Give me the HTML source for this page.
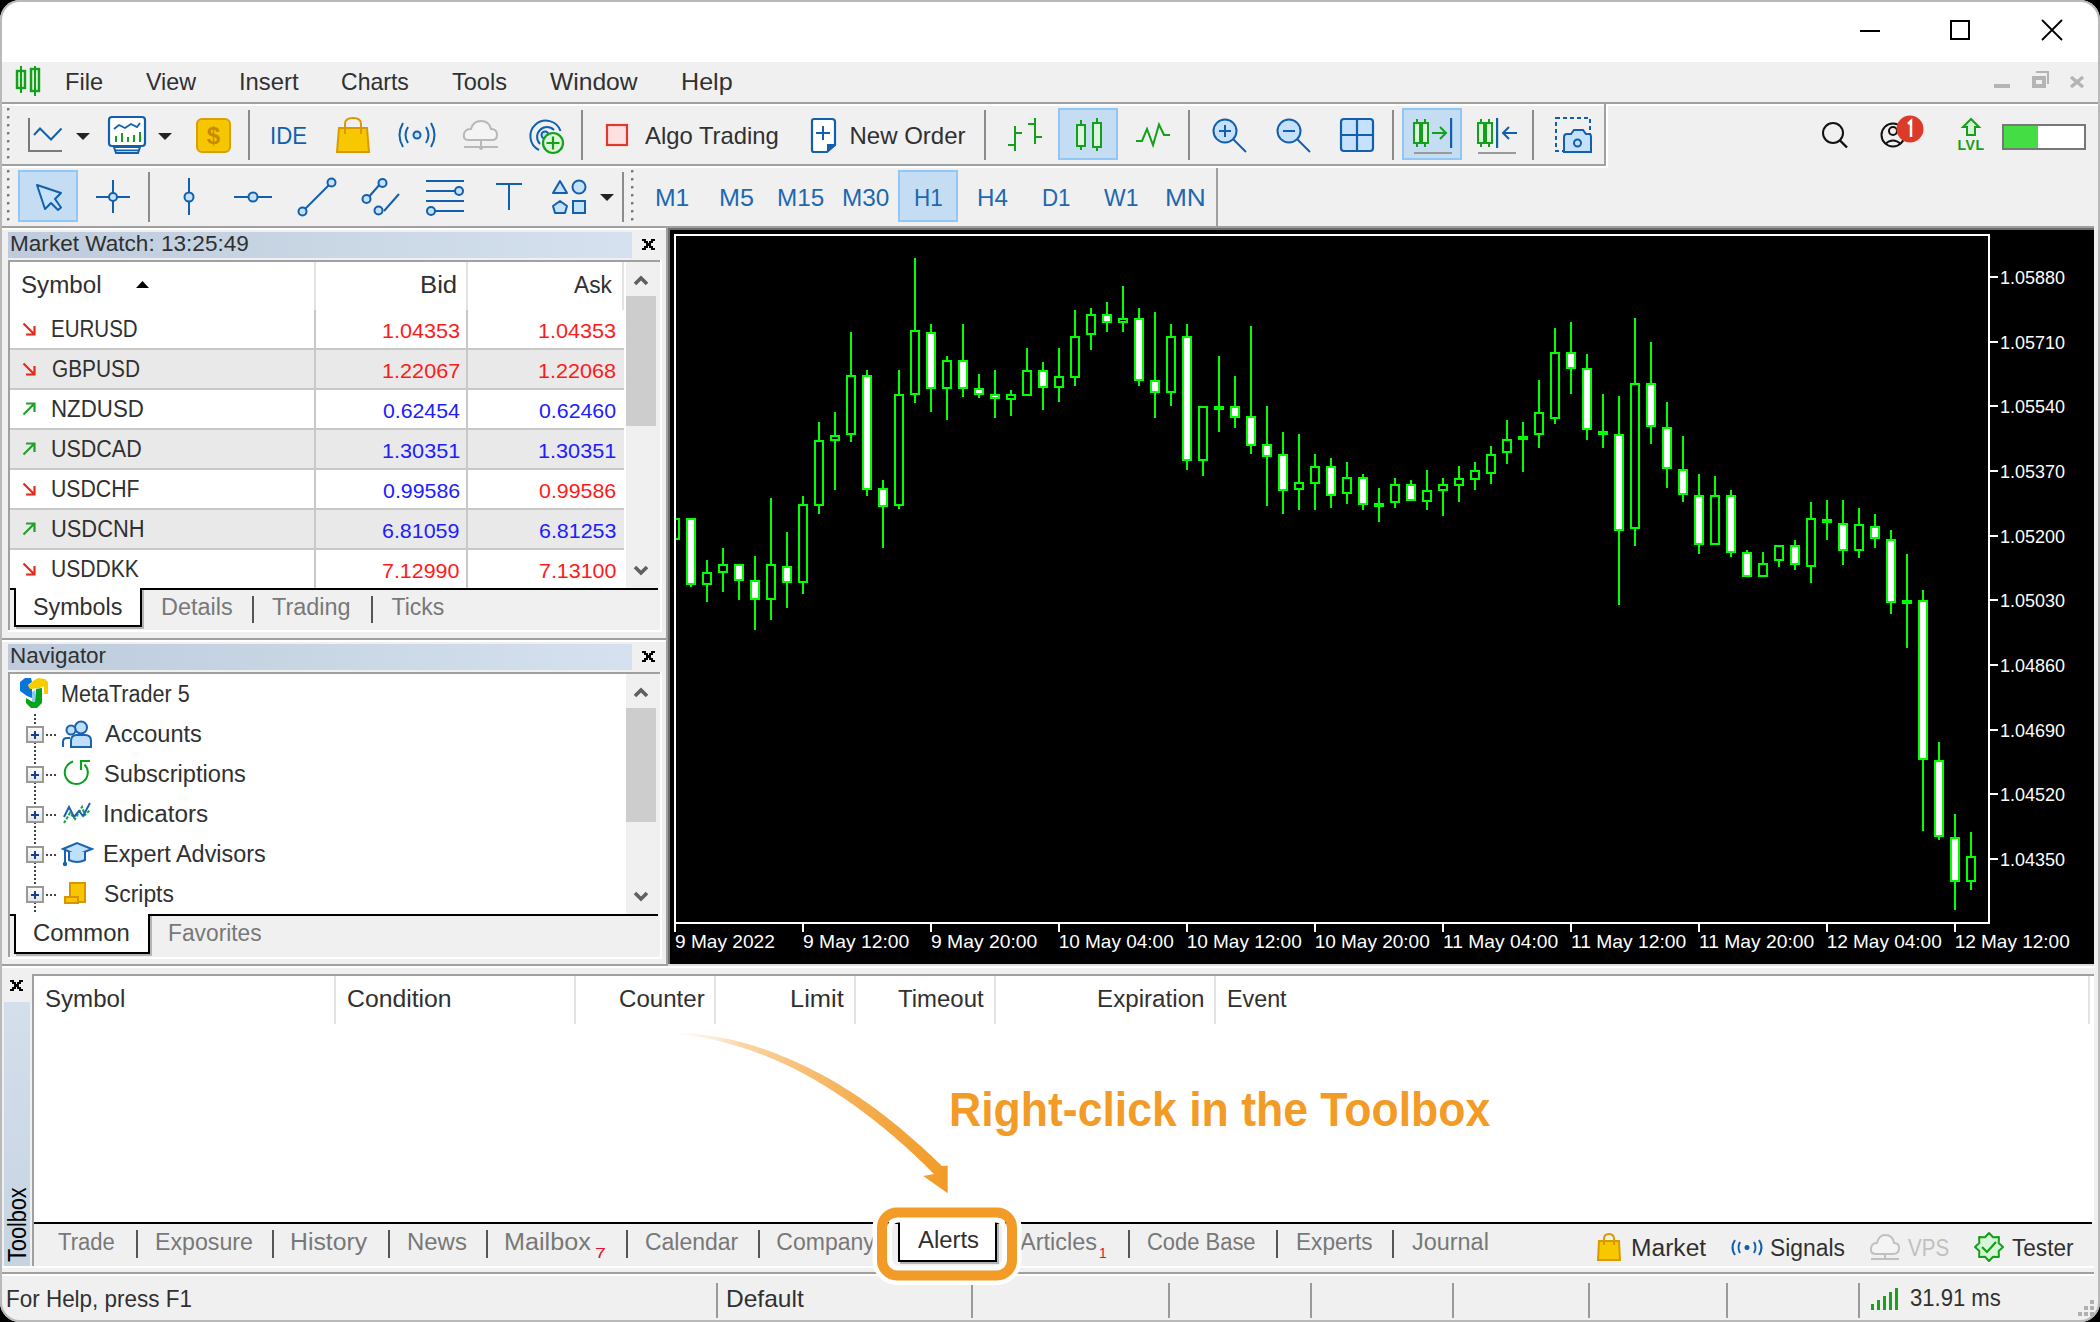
<!DOCTYPE html>
<html><head><meta charset="utf-8"><style>
html,body{margin:0;padding:0;}
body{width:2100px;height:1322px;overflow:hidden;position:relative;background:#f0f0f0;font-family:"Liberation Sans",sans-serif;}
.t{position:absolute;white-space:pre;transform-origin:0 0;font-family:"Liberation Sans",sans-serif;}
.r{position:absolute;}
svg{position:absolute;overflow:visible;}
</style></head><body>
<div class="r" style="left:0px;top:0px;width:2100px;height:1322px;background:#f0f0f0;"></div>
<div class="r" style="left:0px;top:0px;width:2100px;height:62px;background:#fff;"></div>
<div class="r" style="left:0px;top:102px;width:2100px;height:2px;background:#a0a0a0;"></div>
<div class="r" style="left:0px;top:104px;width:2100px;height:2px;background:#fff;"></div>
<div class="r" style="left:0px;top:164px;width:1606px;height:2px;background:#a0a0a0;"></div>
<div class="r" style="left:0px;top:166px;width:1608px;height:2px;background:#fff;"></div>
<div class="r" style="left:1604px;top:104px;width:2px;height:62px;background:#a0a0a0;"></div>
<div class="r" style="left:1606px;top:104px;width:2px;height:64px;background:#fff;"></div>
<div class="r" style="left:1216px;top:168px;width:2px;height:58px;background:#a0a0a0;"></div>
<div class="r" style="left:0px;top:226px;width:2100px;height:2px;background:#a0a0a0;"></div>
<div class="r" style="left:0px;top:228px;width:670px;height:2px;background:#fff;"></div>
<div class="r" style="left:666px;top:228px;width:2px;height:738px;background:#a0a0a0;"></div>
<div class="r" style="left:668px;top:228px;width:1426px;height:2px;background:#6d6d6d;"></div>
<div class="r" style="left:668px;top:228px;width:2px;height:736px;background:#6d6d6d;"></div>
<div class="r" style="left:670px;top:230px;width:1424px;height:734px;background:#000;"></div>
<div class="r" style="left:2094px;top:106px;width:4px;height:1216px;background:#f0f0f0;"></div>
<svg style="left:0;top:0" width="2100" height="1322" viewBox="0 0 2100 1322" shape-rendering="crispEdges"><defs><clipPath id="pc"><rect x="676" y="236" width="1312" height="686"/></clipPath></defs><g clip-path="url(#pc)"><rect x="674" y="518" width="2" height="22" fill="#00ff00"/><rect x="670" y="518" width="10" height="22" fill="#00ff00"/><rect x="672" y="520" width="6" height="18" fill="#000"/><rect x="690" y="518" width="2" height="69" fill="#00ff00"/><rect x="686" y="518" width="10" height="67" fill="#00ff00"/><rect x="688" y="520" width="6" height="63" fill="#fff"/><rect x="706" y="560" width="2" height="42" fill="#00ff00"/><rect x="702" y="572" width="10" height="13" fill="#00ff00"/><rect x="704" y="574" width="6" height="9" fill="#000"/><rect x="722" y="548" width="2" height="44" fill="#00ff00"/><rect x="718" y="564" width="10" height="9" fill="#00ff00"/><rect x="720" y="566" width="6" height="5" fill="#000"/><rect x="738" y="564" width="2" height="36" fill="#00ff00"/><rect x="734" y="564" width="10" height="17" fill="#00ff00"/><rect x="736" y="566" width="6" height="13" fill="#fff"/><rect x="754" y="556" width="2" height="74" fill="#00ff00"/><rect x="750" y="580" width="10" height="20" fill="#00ff00"/><rect x="752" y="582" width="6" height="16" fill="#fff"/><rect x="770" y="498" width="2" height="122" fill="#00ff00"/><rect x="766" y="564" width="10" height="36" fill="#00ff00"/><rect x="768" y="566" width="6" height="32" fill="#000"/><rect x="786" y="532" width="2" height="76" fill="#00ff00"/><rect x="782" y="566" width="10" height="17" fill="#00ff00"/><rect x="784" y="568" width="6" height="13" fill="#fff"/><rect x="802" y="496" width="2" height="98" fill="#00ff00"/><rect x="798" y="504" width="10" height="79" fill="#00ff00"/><rect x="800" y="506" width="6" height="75" fill="#000"/><rect x="818" y="422" width="2" height="92" fill="#00ff00"/><rect x="814" y="440" width="10" height="66" fill="#00ff00"/><rect x="816" y="442" width="6" height="62" fill="#000"/><rect x="834" y="412" width="2" height="78" fill="#00ff00"/><rect x="830" y="435" width="10" height="6" fill="#00ff00"/><rect x="832" y="437" width="6" height="2" fill="#000"/><rect x="850" y="332" width="2" height="110" fill="#00ff00"/><rect x="846" y="375" width="10" height="60" fill="#00ff00"/><rect x="848" y="377" width="6" height="56" fill="#000"/><rect x="866" y="370" width="2" height="126" fill="#00ff00"/><rect x="862" y="375" width="10" height="115" fill="#00ff00"/><rect x="864" y="377" width="6" height="111" fill="#fff"/><rect x="882" y="480" width="2" height="68" fill="#00ff00"/><rect x="878" y="488" width="10" height="19" fill="#00ff00"/><rect x="880" y="490" width="6" height="15" fill="#fff"/><rect x="898" y="370" width="2" height="139" fill="#00ff00"/><rect x="894" y="394" width="10" height="112" fill="#00ff00"/><rect x="896" y="396" width="6" height="108" fill="#000"/><rect x="914" y="258" width="2" height="145" fill="#00ff00"/><rect x="910" y="330" width="10" height="65" fill="#00ff00"/><rect x="912" y="332" width="6" height="61" fill="#000"/><rect x="930" y="324" width="2" height="88" fill="#00ff00"/><rect x="926" y="332" width="10" height="57" fill="#00ff00"/><rect x="928" y="334" width="6" height="53" fill="#fff"/><rect x="946" y="356" width="2" height="64" fill="#00ff00"/><rect x="942" y="360" width="10" height="29" fill="#00ff00"/><rect x="944" y="362" width="6" height="25" fill="#000"/><rect x="962" y="324" width="2" height="73" fill="#00ff00"/><rect x="958" y="360" width="10" height="29" fill="#00ff00"/><rect x="960" y="362" width="6" height="25" fill="#fff"/><rect x="978" y="374" width="2" height="24" fill="#00ff00"/><rect x="974" y="388" width="10" height="7" fill="#00ff00"/><rect x="976" y="390" width="6" height="3" fill="#fff"/><rect x="994" y="370" width="2" height="48" fill="#00ff00"/><rect x="990" y="394" width="10" height="5" fill="#00ff00"/><rect x="992" y="396" width="6" height="1" fill="#fff"/><rect x="1010" y="390" width="2" height="26" fill="#00ff00"/><rect x="1006" y="394" width="10" height="6" fill="#00ff00"/><rect x="1008" y="396" width="6" height="2" fill="#000"/><rect x="1026" y="348" width="2" height="48" fill="#00ff00"/><rect x="1022" y="370" width="10" height="26" fill="#00ff00"/><rect x="1024" y="372" width="6" height="22" fill="#000"/><rect x="1042" y="362" width="2" height="48" fill="#00ff00"/><rect x="1038" y="370" width="10" height="18" fill="#00ff00"/><rect x="1040" y="372" width="6" height="14" fill="#fff"/><rect x="1058" y="348" width="2" height="54" fill="#00ff00"/><rect x="1054" y="376" width="10" height="12" fill="#00ff00"/><rect x="1056" y="378" width="6" height="8" fill="#000"/><rect x="1074" y="310" width="2" height="76" fill="#00ff00"/><rect x="1070" y="336" width="10" height="42" fill="#00ff00"/><rect x="1072" y="338" width="6" height="38" fill="#000"/><rect x="1090" y="308" width="2" height="42" fill="#00ff00"/><rect x="1086" y="314" width="10" height="21" fill="#00ff00"/><rect x="1088" y="316" width="6" height="17" fill="#000"/><rect x="1106" y="302" width="2" height="30" fill="#00ff00"/><rect x="1102" y="314" width="10" height="9" fill="#00ff00"/><rect x="1104" y="316" width="6" height="5" fill="#fff"/><rect x="1122" y="286" width="2" height="46" fill="#00ff00"/><rect x="1118" y="318" width="10" height="5" fill="#00ff00"/><rect x="1120" y="320" width="6" height="1" fill="#000"/><rect x="1138" y="308" width="2" height="78" fill="#00ff00"/><rect x="1134" y="318" width="10" height="63" fill="#00ff00"/><rect x="1136" y="320" width="6" height="59" fill="#fff"/><rect x="1154" y="312" width="2" height="106" fill="#00ff00"/><rect x="1150" y="380" width="10" height="13" fill="#00ff00"/><rect x="1152" y="382" width="6" height="9" fill="#fff"/><rect x="1170" y="324" width="2" height="82" fill="#00ff00"/><rect x="1166" y="336" width="10" height="57" fill="#00ff00"/><rect x="1168" y="338" width="6" height="53" fill="#000"/><rect x="1186" y="324" width="2" height="146" fill="#00ff00"/><rect x="1182" y="336" width="10" height="125" fill="#00ff00"/><rect x="1184" y="338" width="6" height="121" fill="#fff"/><rect x="1202" y="406" width="2" height="70" fill="#00ff00"/><rect x="1198" y="406" width="10" height="55" fill="#00ff00"/><rect x="1200" y="408" width="6" height="51" fill="#000"/><rect x="1218" y="356" width="2" height="76" fill="#00ff00"/><rect x="1214" y="406" width="10" height="4" fill="#00ff00"/><rect x="1216" y="408" width="6" height="0" fill="#fff"/><rect x="1234" y="376" width="2" height="52" fill="#00ff00"/><rect x="1230" y="406" width="10" height="12" fill="#00ff00"/><rect x="1232" y="408" width="6" height="8" fill="#fff"/><rect x="1250" y="326" width="2" height="128" fill="#00ff00"/><rect x="1246" y="416" width="10" height="30" fill="#00ff00"/><rect x="1248" y="418" width="6" height="26" fill="#fff"/><rect x="1266" y="406" width="2" height="100" fill="#00ff00"/><rect x="1262" y="444" width="10" height="13" fill="#00ff00"/><rect x="1264" y="446" width="6" height="9" fill="#fff"/><rect x="1282" y="432" width="2" height="82" fill="#00ff00"/><rect x="1278" y="454" width="10" height="37" fill="#00ff00"/><rect x="1280" y="456" width="6" height="33" fill="#fff"/><rect x="1298" y="434" width="2" height="76" fill="#00ff00"/><rect x="1294" y="482" width="10" height="8" fill="#00ff00"/><rect x="1296" y="484" width="6" height="4" fill="#000"/><rect x="1314" y="454" width="2" height="56" fill="#00ff00"/><rect x="1310" y="466" width="10" height="18" fill="#00ff00"/><rect x="1312" y="468" width="6" height="14" fill="#000"/><rect x="1330" y="458" width="2" height="50" fill="#00ff00"/><rect x="1326" y="466" width="10" height="30" fill="#00ff00"/><rect x="1328" y="468" width="6" height="26" fill="#fff"/><rect x="1346" y="462" width="2" height="42" fill="#00ff00"/><rect x="1342" y="477" width="10" height="17" fill="#00ff00"/><rect x="1344" y="479" width="6" height="13" fill="#000"/><rect x="1362" y="474" width="2" height="36" fill="#00ff00"/><rect x="1358" y="477" width="10" height="28" fill="#00ff00"/><rect x="1360" y="479" width="6" height="24" fill="#fff"/><rect x="1378" y="488" width="2" height="34" fill="#00ff00"/><rect x="1374" y="503" width="10" height="4" fill="#00ff00"/><rect x="1376" y="505" width="6" height="0" fill="#fff"/><rect x="1394" y="478" width="2" height="30" fill="#00ff00"/><rect x="1390" y="484" width="10" height="19" fill="#00ff00"/><rect x="1392" y="486" width="6" height="15" fill="#000"/><rect x="1410" y="480" width="2" height="21" fill="#00ff00"/><rect x="1406" y="484" width="10" height="17" fill="#00ff00"/><rect x="1408" y="486" width="6" height="13" fill="#fff"/><rect x="1426" y="470" width="2" height="40" fill="#00ff00"/><rect x="1422" y="490" width="10" height="12" fill="#00ff00"/><rect x="1424" y="492" width="6" height="8" fill="#000"/><rect x="1442" y="478" width="2" height="38" fill="#00ff00"/><rect x="1438" y="484" width="10" height="7" fill="#00ff00"/><rect x="1440" y="486" width="6" height="3" fill="#000"/><rect x="1458" y="466" width="2" height="36" fill="#00ff00"/><rect x="1454" y="478" width="10" height="8" fill="#00ff00"/><rect x="1456" y="480" width="6" height="4" fill="#000"/><rect x="1474" y="462" width="2" height="28" fill="#00ff00"/><rect x="1470" y="470" width="10" height="10" fill="#00ff00"/><rect x="1472" y="472" width="6" height="6" fill="#000"/><rect x="1490" y="446" width="2" height="38" fill="#00ff00"/><rect x="1486" y="454" width="10" height="20" fill="#00ff00"/><rect x="1488" y="456" width="6" height="16" fill="#000"/><rect x="1506" y="420" width="2" height="44" fill="#00ff00"/><rect x="1502" y="439" width="10" height="14" fill="#00ff00"/><rect x="1504" y="441" width="6" height="10" fill="#000"/><rect x="1522" y="422" width="2" height="50" fill="#00ff00"/><rect x="1518" y="436" width="10" height="4" fill="#00ff00"/><rect x="1520" y="438" width="6" height="0" fill="#fff"/><rect x="1538" y="380" width="2" height="68" fill="#00ff00"/><rect x="1534" y="412" width="10" height="23" fill="#00ff00"/><rect x="1536" y="414" width="6" height="19" fill="#000"/><rect x="1554" y="328" width="2" height="96" fill="#00ff00"/><rect x="1550" y="352" width="10" height="67" fill="#00ff00"/><rect x="1552" y="354" width="6" height="63" fill="#000"/><rect x="1570" y="322" width="2" height="72" fill="#00ff00"/><rect x="1566" y="352" width="10" height="17" fill="#00ff00"/><rect x="1568" y="354" width="6" height="13" fill="#fff"/><rect x="1586" y="354" width="2" height="86" fill="#00ff00"/><rect x="1582" y="368" width="10" height="62" fill="#00ff00"/><rect x="1584" y="370" width="6" height="58" fill="#fff"/><rect x="1602" y="394" width="2" height="54" fill="#00ff00"/><rect x="1598" y="431" width="10" height="4" fill="#00ff00"/><rect x="1600" y="433" width="6" height="0" fill="#fff"/><rect x="1618" y="396" width="2" height="209" fill="#00ff00"/><rect x="1614" y="434" width="10" height="97" fill="#00ff00"/><rect x="1616" y="436" width="6" height="93" fill="#fff"/><rect x="1634" y="318" width="2" height="228" fill="#00ff00"/><rect x="1630" y="383" width="10" height="146" fill="#00ff00"/><rect x="1632" y="385" width="6" height="142" fill="#000"/><rect x="1650" y="342" width="2" height="102" fill="#00ff00"/><rect x="1646" y="383" width="10" height="44" fill="#00ff00"/><rect x="1648" y="385" width="6" height="40" fill="#fff"/><rect x="1666" y="402" width="2" height="86" fill="#00ff00"/><rect x="1662" y="427" width="10" height="42" fill="#00ff00"/><rect x="1664" y="429" width="6" height="38" fill="#fff"/><rect x="1682" y="436" width="2" height="66" fill="#00ff00"/><rect x="1678" y="469" width="10" height="26" fill="#00ff00"/><rect x="1680" y="471" width="6" height="22" fill="#fff"/><rect x="1698" y="474" width="2" height="80" fill="#00ff00"/><rect x="1694" y="495" width="10" height="50" fill="#00ff00"/><rect x="1696" y="497" width="6" height="46" fill="#fff"/><rect x="1714" y="476" width="2" height="69" fill="#00ff00"/><rect x="1710" y="495" width="10" height="50" fill="#00ff00"/><rect x="1712" y="497" width="6" height="46" fill="#000"/><rect x="1730" y="490" width="2" height="67" fill="#00ff00"/><rect x="1726" y="495" width="10" height="58" fill="#00ff00"/><rect x="1728" y="497" width="6" height="54" fill="#fff"/><rect x="1746" y="550" width="2" height="27" fill="#00ff00"/><rect x="1742" y="552" width="10" height="25" fill="#00ff00"/><rect x="1744" y="554" width="6" height="21" fill="#fff"/><rect x="1762" y="552" width="2" height="25" fill="#00ff00"/><rect x="1758" y="563" width="10" height="14" fill="#00ff00"/><rect x="1760" y="565" width="6" height="10" fill="#000"/><rect x="1778" y="545" width="2" height="22" fill="#00ff00"/><rect x="1774" y="545" width="10" height="16" fill="#00ff00"/><rect x="1776" y="547" width="6" height="12" fill="#000"/><rect x="1794" y="540" width="2" height="30" fill="#00ff00"/><rect x="1790" y="545" width="10" height="20" fill="#00ff00"/><rect x="1792" y="547" width="6" height="16" fill="#fff"/><rect x="1810" y="502" width="2" height="81" fill="#00ff00"/><rect x="1806" y="518" width="10" height="49" fill="#00ff00"/><rect x="1808" y="520" width="6" height="45" fill="#000"/><rect x="1826" y="500" width="2" height="40" fill="#00ff00"/><rect x="1822" y="519" width="10" height="4" fill="#00ff00"/><rect x="1824" y="521" width="6" height="0" fill="#fff"/><rect x="1842" y="500" width="2" height="65" fill="#00ff00"/><rect x="1838" y="523" width="10" height="28" fill="#00ff00"/><rect x="1840" y="525" width="6" height="24" fill="#fff"/><rect x="1858" y="508" width="2" height="50" fill="#00ff00"/><rect x="1854" y="524" width="10" height="27" fill="#00ff00"/><rect x="1856" y="526" width="6" height="23" fill="#000"/><rect x="1874" y="514" width="2" height="34" fill="#00ff00"/><rect x="1870" y="526" width="10" height="13" fill="#00ff00"/><rect x="1872" y="528" width="6" height="9" fill="#fff"/><rect x="1890" y="530" width="2" height="84" fill="#00ff00"/><rect x="1886" y="539" width="10" height="64" fill="#00ff00"/><rect x="1888" y="541" width="6" height="60" fill="#fff"/><rect x="1906" y="554" width="2" height="94" fill="#00ff00"/><rect x="1902" y="600" width="10" height="4" fill="#00ff00"/><rect x="1904" y="602" width="6" height="0" fill="#fff"/><rect x="1922" y="590" width="2" height="241" fill="#00ff00"/><rect x="1918" y="600" width="10" height="160" fill="#00ff00"/><rect x="1920" y="602" width="6" height="156" fill="#fff"/><rect x="1938" y="742" width="2" height="98" fill="#00ff00"/><rect x="1934" y="760" width="10" height="77" fill="#00ff00"/><rect x="1936" y="762" width="6" height="73" fill="#fff"/><rect x="1954" y="814" width="2" height="96" fill="#00ff00"/><rect x="1950" y="837" width="10" height="45" fill="#00ff00"/><rect x="1952" y="839" width="6" height="41" fill="#fff"/><rect x="1970" y="832" width="2" height="58" fill="#00ff00"/><rect x="1966" y="856" width="10" height="26" fill="#00ff00"/><rect x="1968" y="858" width="6" height="22" fill="#000"/></g><rect x="674" y="234" width="1316" height="2" fill="#fff"/><rect x="674" y="234" width="2" height="690" fill="#fff"/><rect x="1988" y="234" width="2" height="690" fill="#fff"/><rect x="674" y="922" width="1316" height="2" fill="#fff"/><rect x="1990" y="276" width="8" height="2" fill="#fff"/><rect x="1990" y="341" width="8" height="2" fill="#fff"/><rect x="1990" y="405" width="8" height="2" fill="#fff"/><rect x="1990" y="470" width="8" height="2" fill="#fff"/><rect x="1990" y="535" width="8" height="2" fill="#fff"/><rect x="1990" y="599" width="8" height="2" fill="#fff"/><rect x="1990" y="664" width="8" height="2" fill="#fff"/><rect x="1990" y="729" width="8" height="2" fill="#fff"/><rect x="1990" y="793" width="8" height="2" fill="#fff"/><rect x="1990" y="858" width="8" height="2" fill="#fff"/><rect x="674" y="924" width="2" height="8" fill="#fff"/><rect x="802" y="924" width="2" height="8" fill="#fff"/><rect x="930" y="924" width="2" height="8" fill="#fff"/><rect x="1058" y="924" width="2" height="8" fill="#fff"/><rect x="1186" y="924" width="2" height="8" fill="#fff"/><rect x="1314" y="924" width="2" height="8" fill="#fff"/><rect x="1442" y="924" width="2" height="8" fill="#fff"/><rect x="1570" y="924" width="2" height="8" fill="#fff"/><rect x="1698" y="924" width="2" height="8" fill="#fff"/><rect x="1826" y="924" width="2" height="8" fill="#fff"/><rect x="1954" y="924" width="2" height="8" fill="#fff"/></svg>
<div class="t" style="left:1999.70px;top:267.91px;font-size:19px;line-height:19px;color:#fff;transform:scaleX(0.9456);">1.05880</div>
<div class="t" style="left:1999.70px;top:332.58px;font-size:19px;line-height:19px;color:#fff;transform:scaleX(0.9456);">1.05710</div>
<div class="t" style="left:1999.70px;top:397.25px;font-size:19px;line-height:19px;color:#fff;transform:scaleX(0.9456);">1.05540</div>
<div class="t" style="left:1999.70px;top:461.91px;font-size:19px;line-height:19px;color:#fff;transform:scaleX(0.9456);">1.05370</div>
<div class="t" style="left:1999.70px;top:526.58px;font-size:19px;line-height:19px;color:#fff;transform:scaleX(0.9456);">1.05200</div>
<div class="t" style="left:1999.70px;top:591.25px;font-size:19px;line-height:19px;color:#fff;transform:scaleX(0.9456);">1.05030</div>
<div class="t" style="left:1999.70px;top:655.91px;font-size:19px;line-height:19px;color:#fff;transform:scaleX(0.9456);">1.04860</div>
<div class="t" style="left:1999.70px;top:720.58px;font-size:19px;line-height:19px;color:#fff;transform:scaleX(0.9456);">1.04690</div>
<div class="t" style="left:1999.70px;top:785.25px;font-size:19px;line-height:19px;color:#fff;transform:scaleX(0.9456);">1.04520</div>
<div class="t" style="left:1999.70px;top:849.91px;font-size:19px;line-height:19px;color:#fff;transform:scaleX(0.9456);">1.04350</div>
<div class="t" style="left:675.12px;top:931.91px;font-size:19px;line-height:19px;color:#fff;transform:scaleX(1.0051);">9 May 2022</div>
<div class="t" style="left:803.11px;top:931.91px;font-size:19px;line-height:19px;color:#fff;transform:scaleX(1.0165);">9 May 12:00</div>
<div class="t" style="left:931.11px;top:931.91px;font-size:19px;line-height:19px;color:#fff;transform:scaleX(1.0165);">9 May 20:00</div>
<div class="t" style="left:1058.63px;top:931.91px;font-size:19px;line-height:19px;color:#fff;">10 May 04:00</div>
<div class="t" style="left:1186.63px;top:931.91px;font-size:19px;line-height:19px;color:#fff;">10 May 12:00</div>
<div class="t" style="left:1314.63px;top:931.91px;font-size:19px;line-height:19px;color:#fff;">10 May 20:00</div>
<div class="t" style="left:1442.61px;top:931.91px;font-size:19px;line-height:19px;color:#fff;transform:scaleX(1.0123);">11 May 04:00</div>
<div class="t" style="left:1570.61px;top:931.91px;font-size:19px;line-height:19px;color:#fff;transform:scaleX(1.0123);">11 May 12:00</div>
<div class="t" style="left:1698.61px;top:931.91px;font-size:19px;line-height:19px;color:#fff;transform:scaleX(1.0123);">11 May 20:00</div>
<div class="t" style="left:1826.63px;top:931.91px;font-size:19px;line-height:19px;color:#fff;">12 May 04:00</div>
<div class="t" style="left:1954.63px;top:931.91px;font-size:19px;line-height:19px;color:#fff;">12 May 12:00</div>
<div class="r" style="left:8px;top:232px;width:624px;height:26px;background:linear-gradient(90deg,#bdcbdc 0%,#c9d6e4 50%,#d5e1ee 100%);"></div>
<div class="t" style="left:10.20px;top:232.87px;font-size:22px;line-height:22px;color:#303030;transform:scaleX(1.0261);">Market Watch: 13:25:49</div>
<svg style="left:642px;top:239px" width="13" height="11" viewBox="0 0 13 11" shape-rendering="crispEdges"><path d="M0 0h4v2h2v2h1v-2h2v-2h4v2h-2v2h-2v3h2v2h2v2h-4v-2h-2v-2h-1v2h-2v2h-4v-2h2v-2h2v-3h-2v-2h-2z" fill="#000"/></svg>
<div class="r" style="left:8px;top:260px;width:652px;height:2px;background:#a0a0a0;"></div>
<div class="r" style="left:8px;top:260px;width:2px;height:372px;background:#a0a0a0;"></div>
<div class="r" style="left:660px;top:260px;width:2px;height:372px;background:#fff;"></div>
<div class="r" style="left:8px;top:630px;width:654px;height:2px;background:#fff;"></div>
<div class="r" style="left:10px;top:262px;width:616px;height:327px;background:#fff;"></div>
<div class="r" style="left:626px;top:262px;width:34px;height:327px;background:#f0f0f0;"></div>
<div class="r" style="left:626px;top:296px;width:30px;height:130px;background:#cdcdcd;"></div>
<svg style="left:0;top:0" width="1" height="1"><path d="M635 284 L641 278 L647 284" stroke="#606060" stroke-width="3.6" fill="none" stroke-linecap="butt" stroke-linejoin="miter"/></svg>
<svg style="left:0;top:0" width="1" height="1"><path d="M635 567 L641 573 L647 567" stroke="#606060" stroke-width="3.6" fill="none" stroke-linecap="butt" stroke-linejoin="miter"/></svg>
<div class="r" style="left:314px;top:262px;width:2px;height:48px;background:#e3e3e3;"></div>
<div class="r" style="left:466px;top:262px;width:2px;height:48px;background:#e3e3e3;"></div>
<div class="r" style="left:622px;top:262px;width:2px;height:48px;background:#e3e3e3;"></div>
<div class="t" style="left:20.95px;top:274.03px;font-size:23px;line-height:23px;color:#303030;transform:scaleX(1.0505);">Symbol</div>
<svg style="left:136px;top:281px" width="13" height="8"><path d="M0 7L6.5 0L13 7z" fill="#000"/></svg>
<div class="t" style="left:419.91px;top:274.03px;font-size:23px;line-height:23px;color:#303030;transform:scaleX(1.1167);">Bid</div>
<div class="t" style="left:574.00px;top:274.03px;font-size:23px;line-height:23px;color:#303030;transform:scaleX(0.9902);">Ask</div>
<div class="r" style="left:10px;top:348px;width:614px;height:2px;background:#c8c8c8;"></div>
<div class="r" style="left:314px;top:310px;width:2px;height:38px;background:#c8c8c8;"></div>
<div class="r" style="left:466px;top:310px;width:2px;height:38px;background:#c8c8c8;"></div>
<svg style="left:22px;top:322px" width="14" height="14"><path d="M1.5 1.5L12 12M4 12.5H12.5V4" stroke="#e8291c" stroke-width="2.2" fill="none"/></svg>
<div class="t" style="left:51.33px;top:318.23px;font-size:23px;line-height:23px;color:#303030;transform:scaleX(0.8924);">EURUSD</div>
<div class="t" style="left:381.83px;top:319.72px;font-size:21px;line-height:21px;color:#ff1a1a;transform:scaleX(1.0290);">1.04353</div>
<div class="t" style="left:538.33px;top:319.72px;font-size:21px;line-height:21px;color:#ff1a1a;transform:scaleX(1.0290);">1.04353</div>
<div class="r" style="left:10px;top:350px;width:614px;height:38px;background:#e9e9e9;"></div>
<div class="r" style="left:10px;top:388px;width:614px;height:2px;background:#c8c8c8;"></div>
<div class="r" style="left:314px;top:350px;width:2px;height:38px;background:#c8c8c8;"></div>
<div class="r" style="left:466px;top:350px;width:2px;height:38px;background:#c8c8c8;"></div>
<svg style="left:22px;top:362px" width="14" height="14"><path d="M1.5 1.5L12 12M4 12.5H12.5V4" stroke="#e8291c" stroke-width="2.2" fill="none"/></svg>
<div class="t" style="left:51.98px;top:358.23px;font-size:23px;line-height:23px;color:#303030;transform:scaleX(0.9065);">GBPUSD</div>
<div class="t" style="left:381.83px;top:359.72px;font-size:21px;line-height:21px;color:#ff1a1a;transform:scaleX(1.0307);">1.22067</div>
<div class="t" style="left:538.33px;top:359.72px;font-size:21px;line-height:21px;color:#ff1a1a;transform:scaleX(1.0290);">1.22068</div>
<div class="r" style="left:10px;top:428px;width:614px;height:2px;background:#c8c8c8;"></div>
<div class="r" style="left:314px;top:390px;width:2px;height:38px;background:#c8c8c8;"></div>
<div class="r" style="left:466px;top:390px;width:2px;height:38px;background:#c8c8c8;"></div>
<svg style="left:22px;top:402px" width="14" height="14"><path d="M1.5 12.5L12 2M4 1.5H12.5V10" stroke="#21a12a" stroke-width="2.2" fill="none"/></svg>
<div class="t" style="left:51.18px;top:398.23px;font-size:23px;line-height:23px;color:#303030;transform:scaleX(0.9690);">NZDUSD</div>
<div class="t" style="left:382.74px;top:399.72px;font-size:21px;line-height:21px;color:#2020ff;transform:scaleX(1.0117);">0.62454</div>
<div class="t" style="left:539.24px;top:399.72px;font-size:21px;line-height:21px;color:#2020ff;transform:scaleX(1.0151);">0.62460</div>
<div class="r" style="left:10px;top:430px;width:614px;height:38px;background:#e9e9e9;"></div>
<div class="r" style="left:10px;top:468px;width:614px;height:2px;background:#c8c8c8;"></div>
<div class="r" style="left:314px;top:430px;width:2px;height:38px;background:#c8c8c8;"></div>
<div class="r" style="left:466px;top:430px;width:2px;height:38px;background:#c8c8c8;"></div>
<svg style="left:22px;top:442px" width="14" height="14"><path d="M1.5 12.5L12 2M4 1.5H12.5V10" stroke="#21a12a" stroke-width="2.2" fill="none"/></svg>
<div class="t" style="left:51.37px;top:438.23px;font-size:23px;line-height:23px;color:#303030;transform:scaleX(0.9337);">USDCAD</div>
<div class="t" style="left:381.83px;top:439.72px;font-size:21px;line-height:21px;color:#2020ff;transform:scaleX(1.0307);">1.30351</div>
<div class="t" style="left:538.33px;top:439.72px;font-size:21px;line-height:21px;color:#2020ff;transform:scaleX(1.0307);">1.30351</div>
<div class="r" style="left:10px;top:508px;width:614px;height:2px;background:#c8c8c8;"></div>
<div class="r" style="left:314px;top:470px;width:2px;height:38px;background:#c8c8c8;"></div>
<div class="r" style="left:466px;top:470px;width:2px;height:38px;background:#c8c8c8;"></div>
<svg style="left:22px;top:482px" width="14" height="14"><path d="M1.5 1.5L12 12M4 12.5H12.5V4" stroke="#e8291c" stroke-width="2.2" fill="none"/></svg>
<div class="t" style="left:51.38px;top:478.23px;font-size:23px;line-height:23px;color:#303030;transform:scaleX(0.9235);">USDCHF</div>
<div class="t" style="left:382.74px;top:479.72px;font-size:21px;line-height:21px;color:#2020ff;transform:scaleX(1.0168);">0.99586</div>
<div class="t" style="left:539.24px;top:479.72px;font-size:21px;line-height:21px;color:#ff1a1a;transform:scaleX(1.0168);">0.99586</div>
<div class="r" style="left:10px;top:510px;width:614px;height:38px;background:#e9e9e9;"></div>
<div class="r" style="left:10px;top:548px;width:614px;height:2px;background:#c8c8c8;"></div>
<div class="r" style="left:314px;top:510px;width:2px;height:38px;background:#c8c8c8;"></div>
<div class="r" style="left:466px;top:510px;width:2px;height:38px;background:#c8c8c8;"></div>
<svg style="left:22px;top:522px" width="14" height="14"><path d="M1.5 12.5L12 2M4 1.5H12.5V10" stroke="#21a12a" stroke-width="2.2" fill="none"/></svg>
<div class="t" style="left:51.34px;top:518.23px;font-size:23px;line-height:23px;color:#303030;transform:scaleX(0.9499);">USDCNH</div>
<div class="t" style="left:382.48px;top:519.72px;font-size:21px;line-height:21px;color:#2020ff;transform:scaleX(1.0203);">6.81059</div>
<div class="t" style="left:538.98px;top:519.72px;font-size:21px;line-height:21px;color:#2020ff;transform:scaleX(1.0203);">6.81253</div>
<div class="r" style="left:314px;top:550px;width:2px;height:39px;background:#c8c8c8;"></div>
<div class="r" style="left:466px;top:550px;width:2px;height:39px;background:#c8c8c8;"></div>
<svg style="left:22px;top:562px" width="14" height="14"><path d="M1.5 1.5L12 12M4 12.5H12.5V4" stroke="#e8291c" stroke-width="2.2" fill="none"/></svg>
<div class="t" style="left:51.39px;top:558.23px;font-size:23px;line-height:23px;color:#303030;transform:scaleX(0.9173);">USDDKK</div>
<div class="t" style="left:382.35px;top:559.72px;font-size:21px;line-height:21px;color:#ff1a1a;transform:scaleX(1.0203);">7.12990</div>
<div class="t" style="left:538.85px;top:559.72px;font-size:21px;line-height:21px;color:#ff1a1a;transform:scaleX(1.0203);">7.13100</div>
<div class="r" style="left:10px;top:588px;width:648px;height:2px;background:#000;"></div>
<div class="r" style="left:14px;top:588px;width:128px;height:38px;background:#fff;"></div>
<div class="r" style="left:14px;top:588px;width:2px;height:39px;background:#000;"></div>
<div class="r" style="left:140px;top:588px;width:2px;height:39px;background:#000;"></div>
<div class="r" style="left:14px;top:625px;width:128px;height:2px;background:#000;"></div>
<div class="r" style="left:16px;top:627px;width:128px;height:2px;background:#b4b4b4;"></div>
<div class="r" style="left:142px;top:590px;width:2px;height:39px;background:#b4b4b4;"></div>
<div class="t" style="left:32.99px;top:595.83px;font-size:23px;line-height:23px;color:#303030;transform:scaleX(1.0130);">Symbols</div>
<div class="t" style="left:161.09px;top:595.83px;font-size:23px;line-height:23px;color:#787878;transform:scaleX(1.0193);">Details</div>
<div class="r" style="left:252px;top:596px;width:2px;height:27px;background:#555;"></div>
<div class="t" style="left:272.19px;top:595.83px;font-size:23px;line-height:23px;color:#787878;transform:scaleX(1.0193);">Trading</div>
<div class="r" style="left:371px;top:596px;width:2px;height:27px;background:#555;"></div>
<div class="t" style="left:391.50px;top:595.83px;font-size:23px;line-height:23px;color:#787878;">Ticks</div>
<div class="r" style="left:2px;top:638px;width:664px;height:2px;background:#a0a0a0;"></div>
<div class="r" style="left:2px;top:640px;width:664px;height:2px;background:#fff;"></div>
<div class="r" style="left:8px;top:644px;width:624px;height:26px;background:linear-gradient(90deg,#bdcbdc 0%,#c9d6e4 50%,#d5e1ee 100%);"></div>
<div class="t" style="left:10.21px;top:644.87px;font-size:22px;line-height:22px;color:#303030;transform:scaleX(1.0204);">Navigator</div>
<svg style="left:642px;top:651px" width="13" height="11" viewBox="0 0 13 11" shape-rendering="crispEdges"><path d="M0 0h4v2h2v2h1v-2h2v-2h4v2h-2v2h-2v3h2v2h2v2h-4v-2h-2v-2h-1v2h-2v2h-4v-2h2v-2h2v-3h-2v-2h-2z" fill="#000"/></svg>
<div class="r" style="left:8px;top:672px;width:652px;height:2px;background:#a0a0a0;"></div>
<div class="r" style="left:8px;top:672px;width:2px;height:287px;background:#a0a0a0;"></div>
<div class="r" style="left:660px;top:672px;width:2px;height:287px;background:#fff;"></div>
<div class="r" style="left:8px;top:957px;width:654px;height:2px;background:#fff;"></div>
<div class="r" style="left:10px;top:674px;width:616px;height:240px;background:#fff;"></div>
<div class="r" style="left:626px;top:674px;width:34px;height:240px;background:#f0f0f0;"></div>
<div class="r" style="left:626px;top:708px;width:30px;height:114px;background:#cdcdcd;"></div>
<svg style="left:0;top:0" width="1" height="1"><path d="M635 696 L641 690 L647 696" stroke="#606060" stroke-width="3.6" fill="none" stroke-linecap="butt" stroke-linejoin="miter"/></svg>
<svg style="left:0;top:0" width="1" height="1"><path d="M635 893 L641 899 L647 893" stroke="#606060" stroke-width="3.6" fill="none" stroke-linecap="butt" stroke-linejoin="miter"/></svg>
<svg style="left:0;top:0" width="1" height="1" shape-rendering="crispEdges"><rect x="34" y="714" width="2" height="2" fill="#444"/><rect x="34" y="718" width="2" height="2" fill="#444"/><rect x="34" y="722" width="2" height="2" fill="#444"/><rect x="34" y="726" width="2" height="2" fill="#444"/><rect x="34" y="730" width="2" height="2" fill="#444"/><rect x="34" y="734" width="2" height="2" fill="#444"/><rect x="34" y="738" width="2" height="2" fill="#444"/><rect x="34" y="742" width="2" height="2" fill="#444"/><rect x="34" y="746" width="2" height="2" fill="#444"/><rect x="34" y="750" width="2" height="2" fill="#444"/><rect x="34" y="754" width="2" height="2" fill="#444"/><rect x="34" y="758" width="2" height="2" fill="#444"/><rect x="34" y="762" width="2" height="2" fill="#444"/><rect x="34" y="766" width="2" height="2" fill="#444"/><rect x="34" y="770" width="2" height="2" fill="#444"/><rect x="34" y="774" width="2" height="2" fill="#444"/><rect x="34" y="778" width="2" height="2" fill="#444"/><rect x="34" y="782" width="2" height="2" fill="#444"/><rect x="34" y="786" width="2" height="2" fill="#444"/><rect x="34" y="790" width="2" height="2" fill="#444"/><rect x="34" y="794" width="2" height="2" fill="#444"/><rect x="34" y="798" width="2" height="2" fill="#444"/><rect x="34" y="802" width="2" height="2" fill="#444"/><rect x="34" y="806" width="2" height="2" fill="#444"/><rect x="34" y="810" width="2" height="2" fill="#444"/><rect x="34" y="814" width="2" height="2" fill="#444"/><rect x="34" y="818" width="2" height="2" fill="#444"/><rect x="34" y="822" width="2" height="2" fill="#444"/><rect x="34" y="826" width="2" height="2" fill="#444"/><rect x="34" y="830" width="2" height="2" fill="#444"/><rect x="34" y="834" width="2" height="2" fill="#444"/><rect x="34" y="838" width="2" height="2" fill="#444"/><rect x="34" y="842" width="2" height="2" fill="#444"/><rect x="34" y="846" width="2" height="2" fill="#444"/><rect x="34" y="850" width="2" height="2" fill="#444"/><rect x="34" y="854" width="2" height="2" fill="#444"/><rect x="34" y="858" width="2" height="2" fill="#444"/><rect x="34" y="862" width="2" height="2" fill="#444"/><rect x="34" y="866" width="2" height="2" fill="#444"/><rect x="34" y="870" width="2" height="2" fill="#444"/><rect x="34" y="874" width="2" height="2" fill="#444"/><rect x="34" y="878" width="2" height="2" fill="#444"/><rect x="34" y="882" width="2" height="2" fill="#444"/><rect x="34" y="886" width="2" height="2" fill="#444"/><rect x="34" y="890" width="2" height="2" fill="#444"/><rect x="34" y="894" width="2" height="2" fill="#444"/><rect x="34" y="898" width="2" height="2" fill="#444"/><rect x="34" y="902" width="2" height="2" fill="#444"/><rect x="34" y="906" width="2" height="2" fill="#444"/><rect x="34" y="910" width="2" height="2" fill="#444"/><rect x="46" y="734" width="2" height="2" fill="#444"/><rect x="50" y="734" width="2" height="2" fill="#444"/><rect x="54" y="734" width="2" height="2" fill="#444"/><rect x="46" y="774" width="2" height="2" fill="#444"/><rect x="50" y="774" width="2" height="2" fill="#444"/><rect x="54" y="774" width="2" height="2" fill="#444"/><rect x="46" y="814" width="2" height="2" fill="#444"/><rect x="50" y="814" width="2" height="2" fill="#444"/><rect x="54" y="814" width="2" height="2" fill="#444"/><rect x="46" y="854" width="2" height="2" fill="#444"/><rect x="50" y="854" width="2" height="2" fill="#444"/><rect x="54" y="854" width="2" height="2" fill="#444"/><rect x="46" y="894" width="2" height="2" fill="#444"/><rect x="50" y="894" width="2" height="2" fill="#444"/><rect x="54" y="894" width="2" height="2" fill="#444"/></svg>
<div class="r" style="left:26px;top:726px;width:14px;height:13px;border:2px solid #9a9a9a;background:linear-gradient(#fafafa,#e4e4e4)"></div>
<svg style="left:26px;top:726px" width="18" height="17" shape-rendering="crispEdges"><rect x="5" y="7.5" width="8" height="2" fill="#1b3d8f"/><rect x="8" y="4.5" width="2" height="8" fill="#1b3d8f"/></svg>
<div class="r" style="left:26px;top:766px;width:14px;height:13px;border:2px solid #9a9a9a;background:linear-gradient(#fafafa,#e4e4e4)"></div>
<svg style="left:26px;top:766px" width="18" height="17" shape-rendering="crispEdges"><rect x="5" y="7.5" width="8" height="2" fill="#1b3d8f"/><rect x="8" y="4.5" width="2" height="8" fill="#1b3d8f"/></svg>
<div class="r" style="left:26px;top:806px;width:14px;height:13px;border:2px solid #9a9a9a;background:linear-gradient(#fafafa,#e4e4e4)"></div>
<svg style="left:26px;top:806px" width="18" height="17" shape-rendering="crispEdges"><rect x="5" y="7.5" width="8" height="2" fill="#1b3d8f"/><rect x="8" y="4.5" width="2" height="8" fill="#1b3d8f"/></svg>
<div class="r" style="left:26px;top:846px;width:14px;height:13px;border:2px solid #9a9a9a;background:linear-gradient(#fafafa,#e4e4e4)"></div>
<svg style="left:26px;top:846px" width="18" height="17" shape-rendering="crispEdges"><rect x="5" y="7.5" width="8" height="2" fill="#1b3d8f"/><rect x="8" y="4.5" width="2" height="8" fill="#1b3d8f"/></svg>
<div class="r" style="left:26px;top:886px;width:14px;height:13px;border:2px solid #9a9a9a;background:linear-gradient(#fafafa,#e4e4e4)"></div>
<svg style="left:26px;top:886px" width="18" height="17" shape-rendering="crispEdges"><rect x="5" y="7.5" width="8" height="2" fill="#1b3d8f"/><rect x="8" y="4.5" width="2" height="8" fill="#1b3d8f"/></svg>
<div class="t" style="left:61.24px;top:682.53px;font-size:23px;line-height:23px;color:#303030;transform:scaleX(0.9377);">MetaTrader 5</div>
<div class="t" style="left:105.00px;top:722.53px;font-size:23px;line-height:23px;color:#303030;transform:scaleX(1.0240);">Accounts</div>
<div class="t" style="left:103.97px;top:762.53px;font-size:23px;line-height:23px;color:#303030;transform:scaleX(1.0275);">Subscriptions</div>
<div class="t" style="left:102.76px;top:802.53px;font-size:23px;line-height:23px;color:#303030;transform:scaleX(1.0543);">Indicators</div>
<div class="t" style="left:103.09px;top:842.53px;font-size:23px;line-height:23px;color:#303030;transform:scaleX(1.0191);">Expert Advisors</div>
<div class="t" style="left:104.01px;top:882.53px;font-size:23px;line-height:23px;color:#303030;transform:scaleX(0.9945);">Scripts</div>
<svg style="left:0;top:0" width="1" height="1">
<path d="M25 678 L31 678 L32 682 L28 685 L32 689 L32 698 L27 696 L20 691 L20 682 Z" fill="#0a75d8"/>
<path d="M33 681 L38 678 L45 679 L48 682 L48 694 L44 694 L44 686 L40 688 L30 689 L28 686 Z" fill="#f7cd00"/>
<path d="M36 689 L42 688 L42 703 L37 708 L31 708 L26 703 L26 698 L31 701 L35 702 Z" fill="#03a31c"/>
<path d="M32 692 L35 690 L35 702 L32 701 Z" fill="#8ec8f0"/>
</svg>
<svg style="left:62px;top:720px" width="31" height="28" viewBox="0 0 31 28">
<circle cx="19" cy="7.5" r="6" fill="#bfe0fa" stroke="#1a62b0" stroke-width="2"/>
<path d="M9 27 V21 Q9 15 15 15 H23 Q29 15 29 21 V27 Z" fill="#bfe0fa" stroke="#1a62b0" stroke-width="2"/>
<circle cx="9" cy="10" r="4.5" fill="#bfe0fa" stroke="#1a62b0" stroke-width="2"/>
<path d="M1 27 V22 Q1 18 5 18 H8" fill="none" stroke="#1a62b0" stroke-width="2"/>
</svg>
<svg style="left:0;top:0" width="1" height="1">
<path d="M73 761.5 A11.5 11.5 0 1 0 84.5 764.5" fill="none" stroke="#08a01c" stroke-width="2"/>
<path d="M81 770 V761 H90" fill="none" stroke="#08a01c" stroke-width="2.2"/>
</svg>
<svg style="left:62px;top:801px" width="30" height="24" viewBox="0 0 30 24">
<path d="M2 22 L8 12 L13 18 L20 6 L23 14 L28 9" fill="none" stroke="#19a33a" stroke-width="2" stroke-dasharray="3 1.5"/>
<path d="M2 16 L7 6 L12 16 L17 10 L21 15 L28 2" fill="none" stroke="#1a62b0" stroke-width="2"/>
</svg>
<svg style="left:62px;top:841px" width="31" height="27" viewBox="0 0 31 27">
<path d="M1 8 L15 2 L30 8 L15 14 Z" fill="#bfe0fa" stroke="#1a62b0" stroke-width="2"/>
<path d="M7 11 V19 Q15 23 23 19 V11" fill="#bfe0fa" stroke="#1a62b0" stroke-width="2"/>
<path d="M3 9 V22" stroke="#1a62b0" stroke-width="2"/><circle cx="3" cy="23" r="2.2" fill="#1a62b0"/>
</svg>
<svg style="left:64px;top:881px" width="24" height="24" viewBox="0 0 24 24">
<path d="M6 2 H21 V21 H6 Z" fill="#f7c600" stroke="#d99400" stroke-width="2"/>
<path d="M1 16 H14 V22 H1 Z" fill="#f7c600" stroke="#d99400" stroke-width="2"/>
</svg>
<div class="r" style="left:10px;top:914px;width:648px;height:2px;background:#000;"></div>
<div class="r" style="left:14px;top:914px;width:136px;height:38px;background:#fff;"></div>
<div class="r" style="left:14px;top:914px;width:2px;height:40px;background:#000;"></div>
<div class="r" style="left:148px;top:914px;width:2px;height:40px;background:#000;"></div>
<div class="r" style="left:14px;top:952px;width:136px;height:2px;background:#000;"></div>
<div class="r" style="left:16px;top:954px;width:136px;height:2px;background:#b4b4b4;"></div>
<div class="r" style="left:150px;top:916px;width:2px;height:40px;background:#b4b4b4;"></div>
<div class="t" style="left:32.83px;top:921.53px;font-size:23px;line-height:23px;color:#303030;transform:scaleX(1.0372);">Common</div>
<div class="t" style="left:168.14px;top:921.53px;font-size:23px;line-height:23px;color:#787878;transform:scaleX(0.9905);">Favorites</div>
<div class="r" style="left:2px;top:964px;width:664px;height:2px;background:#a0a0a0;"></div>
<div class="r" style="left:2px;top:966px;width:664px;height:2px;background:#fff;"></div>
<svg style="left:0;top:0" width="2100" height="1322" viewBox="0 0 2100 1322"><rect x="1860" y="30" width="20" height="2" fill="#000"/><rect x="1951" y="21" width="18" height="18" fill="none" stroke="#000" stroke-width="2"/><path d="M2042 20L2062 40M2062 20L2042 40" stroke="#000" stroke-width="1.8"/><rect x="1994" y="84" width="16" height="4" fill="#b4b4b4"/><path d="M2036 72H2048V84" fill="none" stroke="#b4b4b4" stroke-width="2"/><rect x="2034" y="78" width="10" height="8" fill="none" stroke="#b4b4b4" stroke-width="4"/><path d="M2071 77L2083 87M2083 77L2071 87" stroke="#b4b4b4" stroke-width="3.5"/><rect x="17" y="71" width="8" height="17" fill="#d8f5d8" stroke="#13a01a" stroke-width="2.4"/><rect x="20" y="66" width="2" height="27" fill="#13a01a"/><rect x="31" y="69" width="8" height="22" fill="#d8f5d8" stroke="#13a01a" stroke-width="2.4"/><rect x="34" y="66" width="2" height="30" fill="#13a01a"/><rect x="8" y="109" width="2.5" height="2.5" fill="#fff"/><rect x="7" y="108" width="2.5" height="2.5" fill="#7a7a7a"/><rect x="8" y="117" width="2.5" height="2.5" fill="#fff"/><rect x="7" y="116" width="2.5" height="2.5" fill="#7a7a7a"/><rect x="8" y="125" width="2.5" height="2.5" fill="#fff"/><rect x="7" y="124" width="2.5" height="2.5" fill="#7a7a7a"/><rect x="8" y="133" width="2.5" height="2.5" fill="#fff"/><rect x="7" y="132" width="2.5" height="2.5" fill="#7a7a7a"/><rect x="8" y="141" width="2.5" height="2.5" fill="#fff"/><rect x="7" y="140" width="2.5" height="2.5" fill="#7a7a7a"/><rect x="8" y="149" width="2.5" height="2.5" fill="#fff"/><rect x="7" y="148" width="2.5" height="2.5" fill="#7a7a7a"/><rect x="8" y="157" width="2.5" height="2.5" fill="#fff"/><rect x="7" y="156" width="2.5" height="2.5" fill="#7a7a7a"/><rect x="8" y="171" width="2.5" height="2.5" fill="#fff"/><rect x="7" y="170" width="2.5" height="2.5" fill="#7a7a7a"/><rect x="8" y="179" width="2.5" height="2.5" fill="#fff"/><rect x="7" y="178" width="2.5" height="2.5" fill="#7a7a7a"/><rect x="8" y="187" width="2.5" height="2.5" fill="#fff"/><rect x="7" y="186" width="2.5" height="2.5" fill="#7a7a7a"/><rect x="8" y="195" width="2.5" height="2.5" fill="#fff"/><rect x="7" y="194" width="2.5" height="2.5" fill="#7a7a7a"/><rect x="8" y="203" width="2.5" height="2.5" fill="#fff"/><rect x="7" y="202" width="2.5" height="2.5" fill="#7a7a7a"/><rect x="8" y="211" width="2.5" height="2.5" fill="#fff"/><rect x="7" y="210" width="2.5" height="2.5" fill="#7a7a7a"/><rect x="8" y="219" width="2.5" height="2.5" fill="#fff"/><rect x="7" y="218" width="2.5" height="2.5" fill="#7a7a7a"/><rect x="632" y="171" width="2.5" height="2.5" fill="#fff"/><rect x="631" y="170" width="2.5" height="2.5" fill="#7a7a7a"/><rect x="632" y="179" width="2.5" height="2.5" fill="#fff"/><rect x="631" y="178" width="2.5" height="2.5" fill="#7a7a7a"/><rect x="632" y="187" width="2.5" height="2.5" fill="#fff"/><rect x="631" y="186" width="2.5" height="2.5" fill="#7a7a7a"/><rect x="632" y="195" width="2.5" height="2.5" fill="#fff"/><rect x="631" y="194" width="2.5" height="2.5" fill="#7a7a7a"/><rect x="632" y="203" width="2.5" height="2.5" fill="#fff"/><rect x="631" y="202" width="2.5" height="2.5" fill="#7a7a7a"/><rect x="632" y="211" width="2.5" height="2.5" fill="#fff"/><rect x="631" y="210" width="2.5" height="2.5" fill="#7a7a7a"/><rect x="632" y="219" width="2.5" height="2.5" fill="#fff"/><rect x="631" y="218" width="2.5" height="2.5" fill="#7a7a7a"/><rect x="248" y="110" width="2" height="50" fill="#8c8c8c"/><rect x="581" y="110" width="2" height="50" fill="#8c8c8c"/><rect x="984" y="110" width="2" height="50" fill="#8c8c8c"/><rect x="1188" y="110" width="2" height="50" fill="#8c8c8c"/><rect x="1392" y="110" width="2" height="50" fill="#8c8c8c"/><rect x="1532" y="110" width="2" height="50" fill="#8c8c8c"/><rect x="148" y="172" width="2" height="50" fill="#8c8c8c"/><rect x="622" y="172" width="2" height="50" fill="#8c8c8c"/><rect x="1059" y="109" width="58" height="50" fill="#c4ddf3" stroke="#91c7f5" stroke-width="2"/><rect x="1403" y="109" width="58" height="50" fill="#c4ddf3" stroke="#91c7f5" stroke-width="2"/><rect x="19" y="171" width="58" height="50" fill="#c4ddf3" stroke="#91c7f5" stroke-width="2"/><rect x="899" y="171" width="58" height="50" fill="#c4ddf3" stroke="#91c7f5" stroke-width="2"/><path d="M29 118V151H62" fill="none" stroke="#7a7a7a" stroke-width="2"/><path d="M34 135L40 128.5L51 139.5L61.5 128.5" fill="none" stroke="#1260ad" stroke-width="2"/><path d="M76 133H90L83 140Z" fill="#222"/><rect x="109" y="117" width="36" height="29" rx="3" fill="#fff" stroke="#1260ad" stroke-width="2.2"/><path d="M114 129L119 125L125 128L131 124L137 127L140 123" fill="none" stroke="#1260ad" stroke-width="1.8"/><rect x="115" y="136" width="2" height="6" fill="#13a01a"/><rect x="121" y="133" width="2" height="9" fill="#13a01a"/><rect x="127" y="137" width="2" height="5" fill="#13a01a"/><rect x="133" y="135" width="2" height="7" fill="#13a01a"/><rect x="139" y="132" width="2" height="10" fill="#13a01a"/><path d="M114 147H140L138 153H116Z" fill="#fff" stroke="#1260ad" stroke-width="2"/><rect x="116" y="149.5" width="22" height="1.8" fill="#1260ad"/><path d="M158 133H172L165 140Z" fill="#222"/><rect x="197" y="119" width="33" height="33" rx="5" fill="#f6c600" stroke="#d9a000" stroke-width="2"/><text x="213.5" y="144" font-family="Liberation Sans" font-size="24" font-weight="700" fill="#c98a00" text-anchor="middle">$</text><path d="M339 128H367L369 152H337Z" fill="#f7c800" stroke="#d99a00" stroke-width="2"/><path d="M345 134V124Q345 118 353 118Q361 118 361 124V134" fill="none" stroke="#d99a00" stroke-width="2"/><circle cx="417" cy="135" r="3.5" fill="#c5e1fb" stroke="#1260ad" stroke-width="2"/><path d="M408 127Q403 135 408 143M426 127Q431 135 426 143M403 123Q396 135 403 147M431 123Q438 135 431 147" fill="none" stroke="#1260ad" stroke-width="2"/><path d="M468 140Q463 140 464 134Q465 129 471 129Q473 121 481 121Q489 121 491 129Q497 129 497 135Q497 140 492 140Z" fill="#f4f4f4" stroke="#b8b8b8" stroke-width="2"/><path d="M481 140V147M464 147H498" fill="none" stroke="#b8b8b8" stroke-width="2"/><circle cx="481" cy="148" r="2" fill="#b8b8b8"/><path d="M539 150A15.5 15.5 0 1 1 560.5 131" fill="none" stroke="#1260ad" stroke-width="2"/><path d="M540 144A9.5 9.5 0 1 1 554 130" fill="none" stroke="#1260ad" stroke-width="2"/><circle cx="545" cy="135" r="3.5" fill="#c5e1fb" stroke="#1260ad" stroke-width="2"/><circle cx="553" cy="143" r="10" fill="#dcf7dc" stroke="#13a01a" stroke-width="2.2"/><path d="M553 136.5V149.5M546.5 143H559.5" stroke="#13a01a" stroke-width="2.2"/><rect x="607" y="125" width="20" height="20" fill="#fde0e0" stroke="#e03a2e" stroke-width="2.2"/><path d="M812 121Q812 119 814 119H832Q835 119 835 122V145L827 152H814Q812 152 812 150Z" fill="#fff" stroke="#1260ad" stroke-width="2.2"/><path d="M835 144L827 152V144Z" fill="#1260ad"/><path d="M823 126V140M816 133H830" stroke="#1260ad" stroke-width="2"/><path d="M1015 126V151M1008 145H1015M1015 133H1022M1035 118V144M1028 124H1035M1035 137H1042" fill="none" stroke="#13a01a" stroke-width="2"/><path d="M1081 120V150M1097 118V151" stroke="#13a01a" stroke-width="2"/><rect x="1077" y="125" width="8" height="21" fill="#dff5df" stroke="#13a01a" stroke-width="2"/><rect x="1093" y="123" width="8" height="24" fill="#dff5df" stroke="#13a01a" stroke-width="2"/><path d="M1136 141H1142L1147 129L1153 145L1159 124.5L1164 135H1170" fill="none" stroke="#13a01a" stroke-width="2"/><circle cx="1225" cy="131" r="11.5" fill="#c5e1fb" stroke="#1260ad" stroke-width="2"/><path d="M1233 139L1246 152" stroke="#1260ad" stroke-width="2"/><path d="M1219 131H1231" stroke="#1260ad" stroke-width="2"/><path d="M1225 125V137" stroke="#1260ad" stroke-width="2"/><circle cx="1289" cy="131" r="11.5" fill="#c5e1fb" stroke="#1260ad" stroke-width="2"/><path d="M1297 139L1310 152" stroke="#1260ad" stroke-width="2"/><path d="M1283 131H1295" stroke="#1260ad" stroke-width="2"/><rect x="1341" y="119" width="32" height="32" rx="3" fill="#c5e1fb" stroke="#1260ad" stroke-width="2.2"/><path d="M1357 119V151M1341 135H1373" stroke="#1260ad" stroke-width="2.2"/><path d="M1417 119V147M1425 119V147" stroke="#13a01a" stroke-width="2"/><rect x="1414" y="123" width="6" height="20" fill="#dff5df" stroke="#13a01a" stroke-width="2"/><rect x="1422" y="123" width="6" height="20" fill="#dff5df" stroke="#13a01a" stroke-width="2"/><path d="M1432 133H1446M1440 127L1446 133L1440 139" fill="none" stroke="#13a01a" stroke-width="2"/><rect x="1450" y="118" width="2.2" height="30" fill="#1260ad"/><rect x="1414" y="152" width="38" height="2" fill="#9a9a9a"/><path d="M1481 119V147M1489 119V147" stroke="#13a01a" stroke-width="2"/><rect x="1478" y="123" width="6" height="20" fill="#dff5df" stroke="#13a01a" stroke-width="2"/><rect x="1486" y="123" width="6" height="20" fill="#dff5df" stroke="#13a01a" stroke-width="2"/><rect x="1496" y="118" width="2.2" height="30" fill="#1260ad"/><path d="M1503 133H1517M1509 127L1503 133L1509 139" fill="none" stroke="#1260ad" stroke-width="2"/><rect x="1478" y="152" width="38" height="2" fill="#9a9a9a"/><rect x="1556" y="118" width="34" height="33" fill="none" stroke="#1260ad" stroke-width="2" stroke-dasharray="4 3"/><path d="M1564 137Q1564 134 1567 134H1571L1574 130H1583L1586 134H1589Q1591 134 1591 137V152H1564Z" fill="#c5e1fb" stroke="#1260ad" stroke-width="2"/><circle cx="1577.5" cy="143" r="3.5" fill="#c5e1fb" stroke="#1260ad" stroke-width="2"/><circle cx="1833" cy="133" r="10" fill="none" stroke="#111" stroke-width="2"/><path d="M1840 140.5L1847 147.5" stroke="#111" stroke-width="2.4"/><circle cx="1893" cy="135" r="11.5" fill="none" stroke="#111" stroke-width="2"/><circle cx="1893" cy="131" r="4" fill="none" stroke="#111" stroke-width="2"/><path d="M1885 144Q1893 137 1901 144" fill="none" stroke="#111" stroke-width="2"/><circle cx="1910" cy="129" r="13.5" fill="#dd3b2a"/><path d="M1908 124L1911 121V137" fill="none" stroke="#fff" stroke-width="2.5"/><path d="M1971 119L1963 127H1967V135H1975V127H1979Z" fill="#d5f3d5" stroke="#13a01a" stroke-width="2"/><text x="1971" y="150" font-family="Liberation Sans" font-size="14" font-weight="700" fill="#13a01a" text-anchor="middle" letter-spacing="0.5">LVL</text><rect x="2003" y="125" width="82" height="24" fill="#fff" stroke="#777" stroke-width="2"/><rect x="2004" y="126" width="34" height="22" fill="#44dd44"/><path d="M37 185L61 193L55 199L61 207.5L58 210L51 203L45 209Z" fill="#c5e1fb" stroke="#1260ad" stroke-width="2" stroke-linejoin="round"/><path d="M113 180V213M96 197H130" stroke="#1260ad" stroke-width="2"/><circle cx="113" cy="197" r="4" fill="#c5e1fb" stroke="#1260ad" stroke-width="2"/><path d="M189 178V215" stroke="#1260ad" stroke-width="2"/><circle cx="189" cy="197" r="4.5" fill="#c5e1fb" stroke="#1260ad" stroke-width="2"/><path d="M234 197H272" stroke="#1260ad" stroke-width="2"/><circle cx="253" cy="197" r="4.5" fill="#c5e1fb" stroke="#1260ad" stroke-width="2"/><path d="M303 211L331 183" stroke="#1260ad" stroke-width="2"/><circle cx="302.5" cy="211.5" r="4" fill="#c5e1fb" stroke="#1260ad" stroke-width="2"/><circle cx="331.5" cy="182.5" r="4" fill="#c5e1fb" stroke="#1260ad" stroke-width="2"/><path d="M367 199L381 183M384 211L399 194" stroke="#1260ad" stroke-width="2"/><circle cx="366.5" cy="199" r="4" fill="#c5e1fb" stroke="#1260ad" stroke-width="2"/><circle cx="382.5" cy="183" r="4" fill="#c5e1fb" stroke="#1260ad" stroke-width="2"/><circle cx="378.5" cy="210.5" r="4" fill="#c5e1fb" stroke="#1260ad" stroke-width="2"/><path d="M426 181H464M426 191H460M426 201H464M430 211H464" stroke="#1260ad" stroke-width="2"/><circle cx="459" cy="191" r="4" fill="#c5e1fb" stroke="#1260ad" stroke-width="2"/><circle cx="431" cy="211" r="4" fill="#c5e1fb" stroke="#1260ad" stroke-width="2"/><path d="M496 184H522M509 184V210" stroke="#1260ad" stroke-width="2"/><path d="M560 181L567 193H553Z" fill="#c5e1fb" stroke="#1260ad" stroke-width="2" stroke-linejoin="round"/><circle cx="579" cy="187" r="6.5" fill="#c5e1fb" stroke="#1260ad" stroke-width="2"/><path d="M560 201L567 206L565 213H555L553 206Z" fill="#c5e1fb" stroke="#1260ad" stroke-width="2" stroke-linejoin="round"/><rect x="573" y="201" width="12" height="12" fill="#c5e1fb" stroke="#1260ad" stroke-width="2"/><path d="M600 194H614L607 201Z" fill="#222"/></svg>
<div class="r" style="left:0;top:0;width:2100px;height:1322px;box-sizing:border-box;border:2px solid #b9b9b9;border-radius:20px;box-shadow:0 0 0 30px #000;clip-path:inset(0)"></div>
<div class="t" style="left:65.04px;top:69.88px;font-size:24px;line-height:24px;color:#303030;transform:scaleX(0.9825);">File</div>
<div class="t" style="left:145.68px;top:69.88px;font-size:24px;line-height:24px;color:#303030;transform:scaleX(0.9709);">View</div>
<div class="t" style="left:238.57px;top:69.88px;font-size:24px;line-height:24px;color:#303030;transform:scaleX(0.9926);">Insert</div>
<div class="t" style="left:341.10px;top:69.88px;font-size:24px;line-height:24px;color:#303030;transform:scaleX(0.9603);">Charts</div>
<div class="t" style="left:451.91px;top:69.88px;font-size:24px;line-height:24px;color:#303030;transform:scaleX(0.9812);">Tools</div>
<div class="t" style="left:549.87px;top:69.88px;font-size:24px;line-height:24px;color:#303030;transform:scaleX(1.0264);">Window</div>
<div class="t" style="left:681.11px;top:69.88px;font-size:24px;line-height:24px;color:#303030;transform:scaleX(1.0458);">Help</div>
<div class="t" style="left:269.92px;top:123.88px;font-size:24px;line-height:24px;color:#1260ad;transform:scaleX(0.9252);">IDE</div>
<div class="t" style="left:644.80px;top:123.88px;font-size:24px;line-height:24px;color:#303030;transform:scaleX(0.9931);">Algo Trading</div>
<div class="t" style="left:849.51px;top:123.88px;font-size:24px;line-height:24px;color:#303030;">New Order</div>
<div class="t" style="left:655.04px;top:185.68px;font-size:24px;line-height:24px;color:#1d68b0;transform:scaleX(1.0314);">M1</div>
<div class="t" style="left:719.41px;top:185.68px;font-size:24px;line-height:24px;color:#1d68b0;transform:scaleX(1.0469);">M5</div>
<div class="t" style="left:777.48px;top:185.68px;font-size:24px;line-height:24px;color:#1d68b0;transform:scaleX(1.0103);">M15</div>
<div class="t" style="left:841.57px;top:185.68px;font-size:24px;line-height:24px;color:#1d68b0;transform:scaleX(1.0149);">M30</div>
<div class="t" style="left:913.82px;top:185.68px;font-size:24px;line-height:24px;color:#1d68b0;transform:scaleX(0.9376);">H1</div>
<div class="t" style="left:977.19px;top:185.68px;font-size:24px;line-height:24px;color:#1d68b0;transform:scaleX(1.0071);">H4</div>
<div class="t" style="left:1042.04px;top:185.68px;font-size:24px;line-height:24px;color:#1d68b0;transform:scaleX(0.9303);">D1</div>
<div class="t" style="left:1103.88px;top:185.68px;font-size:24px;line-height:24px;color:#1d68b0;transform:scaleX(0.9554);">W1</div>
<div class="t" style="left:1164.81px;top:185.68px;font-size:24px;line-height:24px;color:#1d68b0;transform:scaleX(1.0936);">MN</div>
<div class="r" style="left:2px;top:964px;width:666px;height:2px;background:#a0a0a0;"></div>
<div class="r" style="left:668px;top:964px;width:1426px;height:2px;background:#dcdcdc;"></div>
<div class="r" style="left:2px;top:966px;width:2092px;height:2px;background:#fff;"></div>
<svg style="left:10px;top:980px" width="13" height="11" viewBox="0 0 13 11" shape-rendering="crispEdges"><path d="M0 0h4v2h2v2h1v-2h2v-2h4v2h-2v2h-2v3h2v2h2v2h-4v-2h-2v-2h-1v2h-2v2h-4v-2h2v-2h2v-3h-2v-2h-2z" fill="#000"/></svg>
<div class="r" style="left:4px;top:1002px;width:26px;height:266px;background:linear-gradient(180deg,#d3dfeb 0%,#c6d3e1 100%);"></div>
<div class="t" style="left:4.83px;top:1262.43px;font-size:25px;line-height:25px;color:#000;transform-origin:0 0;transform:rotate(-90deg) scaleX(0.8668);">Toolbox</div>
<div class="r" style="left:32px;top:974px;width:2062px;height:2px;background:#a0a0a0;"></div>
<div class="r" style="left:32px;top:974px;width:2px;height:294px;background:#a0a0a0;"></div>
<div class="r" style="left:34px;top:976px;width:2060px;height:246px;background:#fff;"></div>
<div class="r" style="left:334px;top:976px;width:2px;height:48px;background:#e3e3e3;"></div>
<div class="r" style="left:574px;top:976px;width:2px;height:48px;background:#e3e3e3;"></div>
<div class="r" style="left:714px;top:976px;width:2px;height:48px;background:#e3e3e3;"></div>
<div class="r" style="left:854px;top:976px;width:2px;height:48px;background:#e3e3e3;"></div>
<div class="r" style="left:994px;top:976px;width:2px;height:48px;background:#e3e3e3;"></div>
<div class="r" style="left:1214px;top:976px;width:2px;height:48px;background:#e3e3e3;"></div>
<div class="r" style="left:2088px;top:976px;width:2px;height:48px;background:#e3e3e3;"></div>
<div class="t" style="left:44.65px;top:988.13px;font-size:23px;line-height:23px;color:#303030;transform:scaleX(1.0465);">Symbol</div>
<div class="t" style="left:347.39px;top:988.13px;font-size:23px;line-height:23px;color:#303030;transform:scaleX(1.0762);">Condition</div>
<div class="t" style="left:618.82px;top:988.13px;font-size:23px;line-height:23px;color:#303030;transform:scaleX(1.0467);">Counter</div>
<div class="t" style="left:790.42px;top:988.13px;font-size:23px;line-height:23px;color:#303030;transform:scaleX(1.1075);">Limit</div>
<div class="t" style="left:897.98px;top:988.13px;font-size:23px;line-height:23px;color:#303030;transform:scaleX(1.0413);">Timeout</div>
<div class="t" style="left:1096.53px;top:988.13px;font-size:23px;line-height:23px;color:#303030;transform:scaleX(1.0518);">Expiration</div>
<div class="t" style="left:1226.60px;top:988.13px;font-size:23px;line-height:23px;color:#303030;transform:scaleX(1.0132);">Event</div>
<div class="r" style="left:34px;top:1222px;width:2058px;height:2px;background:#000;"></div>
<div class="r" style="left:34px;top:1224px;width:2058px;height:42px;background:#f0f0f0;"></div>
<div class="r" style="left:2px;top:1266px;width:2092px;height:2px;background:#fff;"></div>
<div class="r" style="left:2px;top:1272px;width:2092px;height:2px;background:#a0a0a0;"></div>
<div class="r" style="left:2px;top:1274px;width:2092px;height:2px;background:#fff;"></div>
<div class="t" style="left:58.12px;top:1230.53px;font-size:23px;line-height:23px;color:#787878;transform:scaleX(0.9593);">Trade</div>
<div class="t" style="left:154.61px;top:1230.53px;font-size:23px;line-height:23px;color:#787878;transform:scaleX(1.0080);">Exposure</div>
<div class="t" style="left:290.48px;top:1230.53px;font-size:23px;line-height:23px;color:#787878;transform:scaleX(1.0772);">History</div>
<div class="t" style="left:407.05px;top:1230.53px;font-size:23px;line-height:23px;color:#787878;transform:scaleX(1.0411);">News</div>
<div class="t" style="left:504.45px;top:1230.53px;font-size:23px;line-height:23px;color:#787878;transform:scaleX(1.0956);">Mailbox</div>
<div class="t" style="left:644.88px;top:1230.53px;font-size:23px;line-height:23px;color:#787878;">Calendar</div>
<div class="t" style="left:776.37px;top:1230.53px;font-size:23px;line-height:23px;color:#787878;">Company</div>
<div class="t" style="left:1020.00px;top:1230.53px;font-size:23px;line-height:23px;color:#787878;transform:scaleX(1.0201);">Articles</div>
<div class="t" style="left:1147.43px;top:1230.53px;font-size:23px;line-height:23px;color:#787878;transform:scaleX(0.9541);">Code Base</div>
<div class="t" style="left:1295.66px;top:1230.53px;font-size:23px;line-height:23px;color:#787878;transform:scaleX(0.9834);">Experts</div>
<div class="t" style="left:1412.12px;top:1230.53px;font-size:23px;line-height:23px;color:#787878;transform:scaleX(1.0187);">Journal</div>
<div class="r" style="left:136px;top:1230px;width:2px;height:28px;background:#555;"></div>
<div class="r" style="left:272px;top:1230px;width:2px;height:28px;background:#555;"></div>
<div class="r" style="left:388px;top:1230px;width:2px;height:28px;background:#555;"></div>
<div class="r" style="left:486px;top:1230px;width:2px;height:28px;background:#555;"></div>
<div class="r" style="left:626px;top:1230px;width:2px;height:28px;background:#555;"></div>
<div class="r" style="left:758px;top:1230px;width:2px;height:28px;background:#555;"></div>
<div class="r" style="left:1128px;top:1230px;width:2px;height:28px;background:#555;"></div>
<div class="r" style="left:1276px;top:1230px;width:2px;height:28px;background:#555;"></div>
<div class="r" style="left:1392px;top:1230px;width:2px;height:28px;background:#555;"></div>
<div class="t" style="left:595.02px;top:1244.80px;font-size:15px;line-height:15px;color:#e8102a;transform:scaleX(1.3091);">7</div>
<div class="t" style="left:1099.46px;top:1244.80px;font-size:15px;line-height:15px;color:#e8102a;transform:scaleX(0.9231);">1</div>
<div class="r" style="left:898px;top:1222px;width:99px;height:40px;background:#fff;"></div>
<div class="r" style="left:898px;top:1222px;width:2px;height:40px;background:#000;"></div>
<div class="r" style="left:995px;top:1222px;width:2px;height:40px;background:#000;"></div>
<div class="r" style="left:898px;top:1260px;width:99px;height:2px;background:#000;"></div>
<div class="r" style="left:900px;top:1262px;width:99px;height:2px;background:#b4b4b4;"></div>
<div class="r" style="left:997px;top:1224px;width:2px;height:40px;background:#b4b4b4;"></div>
<div class="t" style="left:918.00px;top:1229.23px;font-size:23px;line-height:23px;color:#303030;transform:scaleX(1.0367);">Alerts</div>
<svg style="left:0;top:0" width="2100" height="1322" viewBox="0 0 2100 1322"><path d="M1599 1241H1619L1620 1260H1598Z" fill="#f7c800" stroke="#d99a00" stroke-width="2"/><path d="M1604 1245V1239Q1604 1234 1609 1234Q1614 1234 1614 1239V1245" fill="none" stroke="#d99a00" stroke-width="2"/><circle cx="1747" cy="1247.5" r="2.5" fill="#1260ad"/><path d="M1740 1242Q1737 1247.5 1740 1253M1754 1242Q1757 1247.5 1754 1253M1735 1240Q1730 1247.5 1735 1255M1759 1240Q1764 1247.5 1759 1255" fill="none" stroke="#1260ad" stroke-width="2"/><path d="M1876 1254Q1870 1254 1871 1248Q1872 1243 1877 1243Q1879 1235 1885 1235Q1893 1235 1894 1243Q1899 1243 1899 1248Q1899 1254 1893 1254Z" fill="#f4f4f4" stroke="#c0c0c0" stroke-width="2"/><path d="M1885 1254V1259M1871 1259H1899" fill="none" stroke="#c0c0c0" stroke-width="2"/><polygon points="1989.00,1233.00 1993.02,1237.30 1998.90,1237.10 1998.70,1242.98 2003.00,1247.00 1998.70,1251.02 1998.90,1256.90 1993.02,1256.70 1989.00,1261.00 1984.98,1256.70 1979.10,1256.90 1979.30,1251.02 1975.00,1247.00 1979.30,1242.98 1979.10,1237.10 1984.98,1237.30" fill="#d8f5d8" stroke="#13a01a" stroke-width="2" stroke-linejoin="round"/><path d="M1982 1247L1987 1252L1996 1242" fill="none" stroke="#13a01a" stroke-width="2.2"/><rect x="716" y="1283" width="2" height="35" fill="#9a9a9a"/><rect x="971" y="1283" width="2" height="35" fill="#9a9a9a"/><rect x="1168" y="1283" width="2" height="35" fill="#9a9a9a"/><rect x="1310" y="1283" width="2" height="35" fill="#9a9a9a"/><rect x="1452" y="1283" width="2" height="35" fill="#9a9a9a"/><rect x="1588" y="1283" width="2" height="35" fill="#9a9a9a"/><rect x="1726" y="1283" width="2" height="35" fill="#9a9a9a"/><rect x="1858" y="1283" width="2" height="35" fill="#9a9a9a"/><rect x="1871" y="1304" width="3" height="6" fill="#1aa31a"/><rect x="1877" y="1300" width="3" height="10" fill="#1aa31a"/><rect x="1883" y="1296" width="3" height="14" fill="#1aa31a"/><rect x="1889" y="1292" width="3" height="18" fill="#1aa31a"/><rect x="1895" y="1288" width="3" height="22" fill="#1aa31a"/><rect x="2090" y="1300" width="4" height="4" fill="#b0b0b0"/><rect x="2084" y="1306" width="4" height="4" fill="#b0b0b0"/><rect x="2090" y="1306" width="4" height="4" fill="#b0b0b0"/><rect x="2078" y="1312" width="4" height="4" fill="#b0b0b0"/><rect x="2084" y="1312" width="4" height="4" fill="#b0b0b0"/><rect x="2090" y="1312" width="4" height="4" fill="#b0b0b0"/></svg>
<div class="t" style="left:1630.99px;top:1236.53px;font-size:23px;line-height:23px;color:#303030;transform:scaleX(1.0696);">Market</div>
<div class="t" style="left:1769.61px;top:1236.53px;font-size:23px;line-height:23px;color:#303030;transform:scaleX(0.9932);">Signals</div>
<div class="t" style="left:1907.89px;top:1236.53px;font-size:23px;line-height:23px;color:#c0c0c0;transform:scaleX(0.8939);">VPS</div>
<div class="t" style="left:2011.51px;top:1236.53px;font-size:23px;line-height:23px;color:#303030;transform:scaleX(0.9814);">Tester</div>
<div class="t" style="left:5.73px;top:1287.38px;font-size:24px;line-height:24px;color:#303030;transform:scaleX(0.9355);">For Help, press F1</div>
<div class="t" style="left:725.96px;top:1287.38px;font-size:24px;line-height:24px;color:#303030;transform:scaleX(1.0220);">Default</div>
<div class="t" style="left:1909.60px;top:1286.38px;font-size:24px;line-height:24px;color:#303030;transform:scaleX(0.9196);">31.91 ms</div>
<svg style="left:0;top:0" width="2100" height="1322" viewBox="0 0 2100 1322"><defs><linearGradient id="ag" gradientUnits="userSpaceOnUse" x1="670" y1="1032" x2="945" y2="1032"><stop offset="0" stop-color="#f29b27" stop-opacity="0"/><stop offset="0.17" stop-color="#f29b27" stop-opacity="0.2"/><stop offset="0.25" stop-color="#f29b27" stop-opacity="0.4"/><stop offset="0.53" stop-color="#f29b27" stop-opacity="0.68"/><stop offset="0.81" stop-color="#f29b27" stop-opacity="0.9"/><stop offset="1" stop-color="#f29b27"/></linearGradient></defs><rect x="875" y="1205.4" width="144" height="77" rx="22" fill="none" stroke="#fff" stroke-width="5"/><rect x="889.5" y="1219.9" width="115" height="48" rx="9" fill="none" stroke="#fff" stroke-width="5"/><rect x="882" y="1212.4" width="130" height="63" rx="15" fill="none" stroke="#f29b27" stroke-width="10"/><path d="M669.5 1032.4 L672.9 1032.5 L676.3 1032.6 L679.7 1032.8 L683.2 1033.0 L686.6 1033.2 L690.0 1033.5 L693.4 1033.8 L696.8 1034.1 L700.3 1034.5 L703.7 1034.9 L707.1 1035.4 L710.6 1035.9 L714.0 1036.5 L717.4 1037.0 L720.9 1037.7 L724.3 1038.3 L727.8 1039.0 L731.2 1039.8 L734.7 1040.6 L738.1 1041.4 L741.6 1042.3 L745.0 1043.2 L748.4 1044.2 L751.9 1045.3 L755.3 1046.3 L758.8 1047.5 L762.2 1048.6 L765.7 1049.8 L769.1 1051.0 L772.6 1052.3 L776.0 1053.6 L779.5 1055.0 L782.9 1056.4 L786.4 1057.8 L789.8 1059.2 L793.3 1060.8 L796.7 1062.3 L800.2 1063.9 L803.7 1065.5 L807.1 1067.2 L810.6 1068.9 L814.1 1070.7 L817.5 1072.5 L821.0 1074.3 L824.5 1076.2 L827.9 1078.1 L831.4 1080.1 L834.9 1082.1 L838.3 1084.1 L841.8 1086.2 L845.3 1088.4 L848.7 1090.5 L852.2 1092.8 L855.7 1095.0 L859.1 1097.3 L862.6 1099.7 L866.0 1102.1 L869.5 1104.6 L872.9 1107.1 L876.4 1109.6 L879.9 1112.2 L883.3 1114.8 L886.8 1117.5 L890.2 1120.2 L893.7 1123.0 L897.1 1125.8 L900.6 1128.6 L904.0 1131.5 L907.5 1134.4 L910.9 1137.4 L914.4 1140.4 L917.8 1143.5 L921.3 1146.6 L924.7 1149.7 L928.2 1152.9 L931.6 1156.1 L935.1 1159.4 L938.5 1162.7 L942.0 1166.1 L947.7 1165.7 L947.7 1193.3 L923.2 1176.0 L934.0 1174.0 L930.7 1170.7 L927.4 1167.4 L924.0 1164.1 L920.7 1160.9 L917.3 1157.7 L914.0 1154.5 L910.6 1151.4 L907.3 1148.4 L903.9 1145.3 L900.6 1142.4 L897.2 1139.4 L893.9 1136.5 L890.5 1133.7 L887.2 1130.9 L883.8 1128.1 L880.5 1125.4 L877.1 1122.7 L873.8 1120.1 L870.4 1117.5 L867.1 1114.9 L863.8 1112.4 L860.4 1109.9 L857.1 1107.5 L853.7 1105.1 L850.4 1102.8 L847.1 1100.4 L843.7 1098.1 L840.4 1095.9 L837.1 1093.7 L833.7 1091.5 L830.4 1089.4 L827.1 1087.3 L823.8 1085.2 L820.4 1083.2 L817.1 1081.3 L813.8 1079.3 L810.4 1077.4 L807.1 1075.6 L803.8 1073.8 L800.4 1072.0 L797.1 1070.3 L793.8 1068.6 L790.4 1066.9 L787.1 1065.3 L783.7 1063.7 L780.4 1062.2 L777.1 1060.7 L773.7 1059.3 L770.4 1057.9 L767.0 1056.5 L763.7 1055.2 L760.3 1053.9 L757.0 1052.7 L753.6 1051.5 L750.3 1050.3 L746.9 1049.2 L743.5 1048.1 L740.2 1047.0 L736.8 1046.0 L733.5 1045.0 L730.1 1044.0 L726.8 1043.1 L723.4 1042.2 L720.1 1041.3 L716.7 1040.5 L713.4 1039.7 L710.0 1038.9 L706.6 1038.2 L703.3 1037.5 L699.9 1036.9 L696.5 1036.3 L693.2 1035.7 L689.8 1035.2 L686.4 1034.7 L683.0 1034.3 L679.7 1033.8 L676.3 1033.5 L672.9 1033.1 L669.5 1032.8Z" fill="url(#ag)"/></svg>
<div class="t" style="left:949.04px;top:1084.51px;font-size:49px;line-height:49px;color:#f29b27;font-weight:700;transform:scaleX(0.9094);">Right-click in the Toolbox</div>
</body></html>
